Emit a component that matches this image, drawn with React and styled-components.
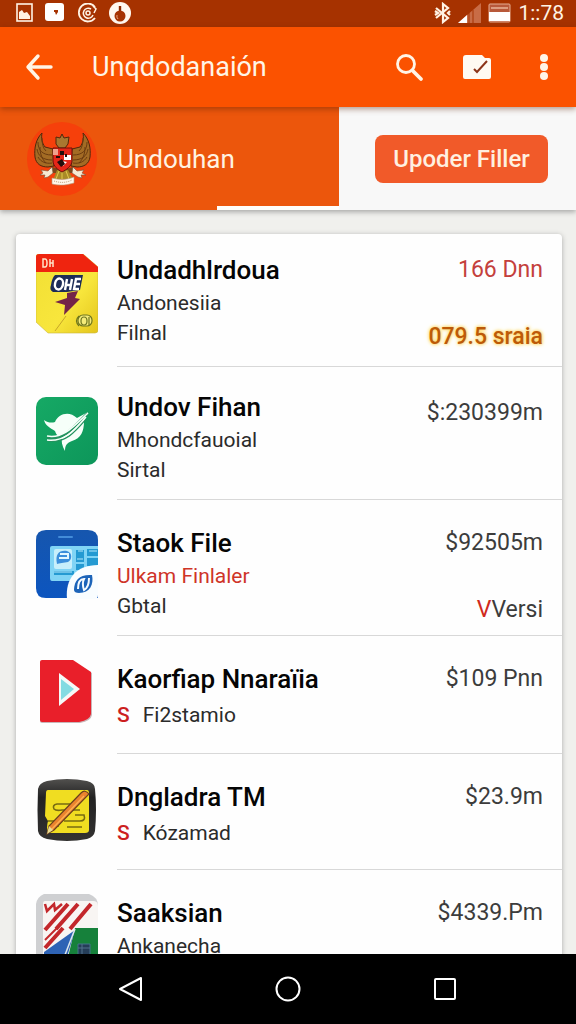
import React from 'react';
import styled, { createGlobalStyle } from 'styled-components';

const GlobalStyle = createGlobalStyle`
  * { box-sizing: border-box; }
  body { margin: 0; background: #f0f0ed; font-family: Roboto, "Liberation Sans", sans-serif; }
  button { font: inherit; color: inherit; border: 0; padding: 0; background: none; cursor: pointer; }
  h1, h2, h3, p, ul { margin: 0; padding: 0; }
  svg { display: block; }
`;

const Screen = styled.div`
  display: flex;
  flex-direction: column;
  height: 100vh;
`;

const StatusBar = styled.div`
  display: flex;
  flex: none;
  align-items: center;
  justify-content: space-between;
  height: 27px;
  padding: 0 12px 2px 16px;
  background: #a63200;
  color: #fff3e4;
`;

const StatusGroup = styled.div`
  display: flex;
  align-items: center;
  gap: ${(p) => p.$gap}px;
`;

const Clock = styled.span`
  font-size: 21px;
  line-height: 24px;
`;

const AppBar = styled.header`
  display: flex;
  flex: none;
  align-items: center;
  height: 80px;
  padding: 0 18px 0 24px;
  background: #fb5200;
  color: #fff5e6;
  z-index: 1;
  box-shadow: 0 2px 6px rgba(90, 30, 0, 0.45);
`;

const IconButton = styled.button`
  display: flex;
  align-items: center;
  justify-content: center;
  width: 30px;
  height: 40px;
`;

const AppTitle = styled.h1`
  flex: 1;
  margin-left: 38px;
  font-size: 27px;
  line-height: 32px;
  font-weight: 400;
`;

const Actions = styled.div`
  display: flex;
  gap: 37px;
`;

const Banner = styled.section`
  display: grid;
  grid-template-columns: 339fr 237fr;
  flex: none;
  height: 103px;
  background: #f8f8f8;
  box-shadow: 0 2px 5px rgba(60, 60, 60, 0.4);
`;

const Profile = styled.div`
  position: relative;
  display: flex;
  align-items: center;
  gap: 20px;
  padding-left: 27px;
  background: #ec560c;
  color: #fff3e2;
`;

const ProfileName = styled.h2`
  font-size: 26px;
  line-height: 32px;
  font-weight: 400;
`;

const Indicator = styled.span`
  position: absolute;
  right: 0;
  bottom: 0;
  width: 36%;
  height: 4px;
  background: #fffdfa;
`;

const BannerAction = styled.div`
  display: flex;
  align-items: center;
  justify-content: center;
  padding-left: 8px;
`;

const FilterButton = styled.button`
  height: 48px;
  padding: 0 18px;
  border-radius: 8px;
  background: #f15a29;
  color: #fff0e0;
  font-size: 24px;
  font-weight: 500;
`;

const Content = styled.main`
  flex: 1;
  min-height: 0;
  overflow: hidden;
  padding: 24px 14px 0 16px;
`;

const Card = styled.ul`
  list-style: none;
  border-radius: 4px;
  background: #fefefe;
  box-shadow: 0 1px 5px rgba(60, 60, 60, 0.38);
`;

const Row = styled.li`
  display: grid;
  grid-template-columns: 62px 1fr;
  gap: 19px;
  padding-left: 20px;
`;

const Thumb = styled.div`
  padding-top: ${(p) => p.$top}px;
`;

const Body = styled.div`
  display: flex;
  justify-content: space-between;
  padding: ${(p) => p.$top}px 19px ${(p) => p.$bottom}px 0;
  border-bottom: 1px solid #d8d8d8;
  white-space: nowrap;
`;

const Name = styled.h3`
  font-size: 26px;
  line-height: 36px;
  font-weight: 500;
  color: #050505;
`;

const Line = styled.p`
  font-size: 21px;
  line-height: 30px;
  color: ${(p) => (p.$alert ? '#cf3428' : '#2b2b2b')};
`;

const TaggedLine = styled.p`
  display: flex;
  gap: 13px;
  font-size: 21px;
  line-height: 36px;
  color: #2b2b2b;
`;

const Tag = styled.span`
  color: #cc1f1f;
  font-weight: 500;
`;

const Values = styled.div`
  display: flex;
  flex-direction: column;
  align-items: flex-end;
  gap: 31px;
  padding-top: ${(p) => (p.$low ? 6 : 0)}px;
`;

const tones = { normal: '#3c3c3c', red: '#c4403c', amber: '#bd5a08' };

const Amount = styled.span`
  font-size: 23px;
  line-height: 36px;
  font-weight: ${(p) => (p.$tone === 'amber' ? 500 : 400)};
  color: ${(p) => tones[p.$tone || 'normal']};
  text-shadow: ${(p) => (p.$tone === 'amber' ? '0 0 4px #ffd65c, 0 0 3px #ffd65c' : 'none')};
`;

const Flag = styled.span`
  color: #d02a1c;
`;

const NavBar = styled.nav`
  display: grid;
  grid-template-columns: repeat(3, 1fr);
  flex: none;
  align-items: center;
  justify-items: center;
  height: 70px;
  padding: 0 52px;
  background: #000;
  color: #fff;
`;

const Emblem = () => (
  <svg width="70" height="74" viewBox="0 0 70 74" aria-hidden="true">
    <ellipse cx="35" cy="37" rx="35" ry="37" fill="#f6400b" />
    <g stroke="#51280b" strokeWidth="1" strokeLinejoin="round">
      <path fill="#a36b24" d="M15 11C9 17 7 26 8 35c1 7 6 10 13 10l6-1-1-17-8-2c-3-4-4-9-3-14z" />
      <path fill="#a36b24" d="M56 11c6 6 8 15 7 24-1 7-6 10-13 10l-6-1 1-17 8-2c3-4 4-9 3-14z" />
      <path fill="#a97730" d="M29 15l4 1 2-4 2 4 5-1-1 7-3 4h-6l-3-4z" />
    </g>
    <g fill="none" stroke="#6b3b10" strokeWidth="1">
      <path d="M11 20c0 8 4 13 14 13M10 27c1 7 6 11 15 11M11 35c3 5 8 7 14 6M15 16c0 6 1 10 4 13M13 25c0 7 2 12 6 16" />
      <path d="M60 20c0 8-4 13-14 13M61 27c-1 7-6 11-15 11M60 35c-3 5-8 7-14 6M56 16c0 6-1 10-4 13M58 25c0 7-2 12-6 16" />
    </g>
    <path fill="#7b471b" d="M25 45l-5 6h31l-5-6-10 3z" />
    <path fill="#f7e9d3" stroke="#7b5337" strokeWidth=".6" d="M25 45l-4 4-7-1 2 3-3 2h5l-1 3 4-1 5-4zM46 45l4 4 7-1-2 3 4 2h-5l1 3-4-1-6-4z" />
    <path fill="#a98a27" d="M30 48h11l5 9-20 1z" />
    <path d="M32 49l-3 8m6-8v8m4-8 3 8" stroke="#e4c74c" strokeWidth="1" />
    <path fill="#e62619" stroke="#6a120b" strokeWidth="1" d="M26 26h19v13c0 5-6 9-10 11-4-2-9-6-9-11z" />
    <path fill="#f0a08e" d="M26 27h5v6h-5z" />
    <path fill="#fff" d="M37 33h7v5h-7zM35 39l5 1-4 4z" />
    <path fill="#240d0b" d="M33 29h4v4h-4zM30 40l5-3 3 5-4 3zM38 32h2v3h-2zM29 34h4v2h-4z" />
    <path fill="#fff6e9" stroke="#b29a7e" strokeWidth=".6" d="M25 56c7 2 15 2 22-1v6c-7 2-14 3-22 1z" />
    <path d="M27 59c6 2 12 2 18-1" stroke="#bd9f7d" strokeWidth="1" strokeDasharray="1 1" fill="none" />
  </svg>
);

const PackIcon = () => (
  <svg width="62" height="80" viewBox="0 0 62 80" aria-hidden="true">
    <defs>
      <linearGradient id="pack" x1="0" y1="0" x2="1" y2="1">
        <stop offset="0" stopColor="#f1df34" />
        <stop offset=".6" stopColor="#f8e63c" />
        <stop offset="1" stopColor="#e4c51c" />
      </linearGradient>
    </defs>
    <path d="M3 0h44l15 13v63q0 3-3 3H12L0 68V3q0-3 3-3z" fill="url(#pack)" stroke="#cbb73b" strokeWidth=".6" />
    <path d="M3 0h44l15 13v5H0V3q0-3 3-3z" fill="#ef240f" />
    <g stroke="#ffe2c8" strokeWidth="1.5" fill="none">
      <path d="M7 5v8h2q2 0 2-4t-2-4zM14 5v8M17 6v7M14 9h3" />
    </g>
    <path d="M19 21h28l-3 15-13 2H17q-4-2-2-7 1-7 4-10z" fill="#1d2c57" />
    <g stroke="#fff" strokeWidth="2.4" fill="none">
      <ellipse cx="23" cy="30" rx="4" ry="5.5" transform="rotate(12 23 30)" />
      <path d="M31 25l-2 11M36 25l-2 11M30 31h5M45 25h-5l-2 10h5M39 30h5" />
    </g>
    <path d="M31 39l11-2-3 7 5 1-16 16 1-10-10-3 12-4z" fill="#742448" />
    <path d="M19 77l11-15" stroke="#c7a728" strokeWidth="1" />
    <g fill="none" stroke="#6e761f" strokeWidth="1.2">
      <rect x="42" y="61" width="14" height="11" rx="5" fill="#f4eb7a" />
      <ellipse cx="48" cy="67" rx="3" ry="4" />
      <path d="M53 63v8M43 62q-5 5 0 10" />
    </g>
  </svg>
);

const BirdIcon = () => (
  <svg width="62" height="80" viewBox="0 0 62 80" aria-hidden="true">
    <defs>
      <linearGradient id="bird" x1="0" y1="0" x2="1" y2="1">
        <stop offset="0" stopColor="#16a965" />
        <stop offset="1" stopColor="#0d965a" />
      </linearGradient>
    </defs>
    <rect y="6" width="62" height="68" rx="10" fill="url(#bird)" />
    <path fill="#f6fff9" d="M8 29c4 3 8 3 11 2 3-8 14-12 22-4l11-6c-2 4-3 6-4 9 0 11-3 17-12 20-5 2-7 4-7 10-3-5-4-10-3-15-5 0-6-2-7-5C14 37 9 34 8 29z" />
    <path d="M11 46c17 4 26-9 41-24" stroke="#24935f" strokeWidth="3" fill="none" />
    <path d="M12 50c18 2 27-9 38-22" stroke="#24935f" strokeWidth="1.4" fill="none" />
    <path d="M11 45c16 3 26-9 41-23M11 49c17 2 26-8 39-23" stroke="#f6fff9" strokeWidth="1.5" fill="none" />
  </svg>
);

const FileIcon = () => (
  <svg width="62" height="80" viewBox="0 0 62 80" aria-hidden="true">
    <defs>
      <linearGradient id="file" x1="0" y1="0" x2="0" y2="1">
        <stop offset="0" stopColor="#1656ae" />
        <stop offset="1" stopColor="#0c55bf" />
      </linearGradient>
    </defs>
    <path d="M10 6h42q10 0 10 10v58H10Q0 74 0 64V16Q0 6 10 6z" fill="url(#file)" />
    <path d="M23 13h13" stroke="#438cd9" strokeWidth="2" strokeLinecap="round" />
    <path d="M16 22h46v35H16q-2 0-2-3V24q0-2 2-2z" fill="#80d4f5" />
    <rect x="18" y="25" width="18" height="20" rx="2" fill="#c7effb" />
    <path d="M21 40c-2-10 2-14 10-13 6 2 5 9 1 11-4 1-9 1-11 2z" fill="#3c8fdb" />
    <path d="M24 30h8v4h-9" fill="none" stroke="#e4f8ff" strokeWidth="2" />
    <path d="M18 47h20v4H18zM40 26h8v12h-8zM51 25h11v7H51zM51 34h11v8H51zM40 40h8v6h-8z" fill="#249ad2" />
    <path d="M42 27h5M53 27h8M41 35h6M18 48h18" stroke="#b6e8fa" strokeWidth="1.2" />
    <path d="M31 75c-2-20 9-34 31-34v30q0 4-4 4z" fill="#f9fdff" />
    <path d="M38 66c0-10 6-16 18-15 2 9-2 18-13 18-3 0-5-1-5-3z" fill="#1c64b9" />
    <path d="M42 65c0-7 2-10 6-10-2 4-1 8 0 11 4-2 5-6 5-12" stroke="#f5fbff" strokeWidth="2" fill="none" />
  </svg>
);

const PlayIcon = () => (
  <svg width="62" height="80" viewBox="0 0 62 80" aria-hidden="true">
    <path d="M6 9h31l19 12v42q-1 6-12 8H6q-2 0-2-2V11q0-2 2-2z" fill="#c9b6b8" />
    <path d="M6 8h31l18 12v42q-1 6-12 8H6q-2 0-2-2V10q0-2 2-2z" fill="#e91f2a" />
    <path d="M23 21v33l21-17z" fill="#f5f8f7" />
    <path d="M25 27v21l13-11z" fill="#83dbe2" />
  </svg>
);

const NoteIcon = () => (
  <svg width="62" height="80" viewBox="0 0 62 80" aria-hidden="true">
    <defs>
      <linearGradient id="frame" x1="0" y1="0" x2="0" y2="1">
        <stop offset="0" stopColor="#51504e" />
        <stop offset=".3" stopColor="#222" />
        <stop offset="1" stopColor="#333231" />
      </linearGradient>
    </defs>
    <path d="M11 11q20-4 40 0 8 2 8 8 2 21 0 42-1 6-8 8-20 4-40 0-8-2-9-8-1-21 0-42 1-6 9-8z" fill="url(#frame)" />
    <path d="M12 20h39q2 0 2 3v37q0 3-4 3H12q-2-5 0-12l-3-5 1-23q0-3 2-3z" fill="#f0dd21" />
    <g fill="none" stroke="#776b12" strokeWidth="1.6">
      <path d="M34 34H21q-5 1-3 5 2 2 8 1h18M39 45h9q2 6-4 6H28M31 57h15M12 51h13M13 56h10" />
    </g>
    <path d="M45 23q4-4 8 1L18 60l-7 4 2-8z" fill="#eb832e" stroke="#6a401c" strokeWidth="1.2" />
    <path d="M48 26L15 60" stroke="#ffb052" strokeWidth="1.3" />
    <path d="M11 64l2-8 4 4z" fill="#eadd94" />
  </svg>
);

const PosterIcon = () => (
  <svg width="62" height="80" viewBox="0 0 62 80" aria-hidden="true">
    <path d="M8 0h45q9 3 9 12v68H0V10Q1 3 8 0z" fill="#cfd0d2" />
    <path d="M9 7h48q5 0 5 5v68H7V10q0-3 2-3z" fill="#f8f5f3" />
    <g stroke="#c3272b" strokeWidth="4" fill="none">
      <path d="M9 36l23-26M20 35l22-25M34 35l21-25M9 54l18-20" />
      <path d="M9 10l2 7 7-7 1 6 7-6" strokeWidth="2.5" />
      <path d="M9 46l12-12" strokeWidth="2" />
    </g>
    <path d="M39 34h23v46H28z" fill="#16813b" />
    <path d="M8 58l31-22-13 44H8z" fill="#2e63b5" />
    <path d="M39 35L27 66" stroke="#dfe8ed" strokeWidth="1.5" />
    <path d="M42 50h12v18H42z" fill="#253d58" stroke="#45728c" strokeWidth="1" />
    <path d="M42 54h12M46 50v16" stroke="#52728c" strokeWidth="1" />
  </svg>
);

const items = [
  {
    name: 'Undadhlrdoua', lines: ['Andonesiia', 'Filnal'], icon: PackIcon, iconTop: 20, top: 18, bottom: 11,
    values: [{ text: '166 Dnn', tone: 'red' }, { text: '079.5 sraia', tone: 'amber' }],
  },
  {
    name: 'Undov Fihan', lines: ['Mhondcfauoial', 'Sirtal'], icon: BirdIcon, iconTop: 24, top: 22, bottom: 14,
    low: true, values: [{ text: '$:230399m' }],
  },
  {
    name: 'Staok File', lines: ['Ulkam Finlaler', 'Gbtal'], alertLine: 0, icon: FileIcon, iconTop: 24, top: 25, bottom: 7,
    values: [{ text: '$92505m' }, { flag: 'V', text: 'Versi' }],
  },
  { name: 'Kaorfiap Nnaraïia', tagged: 'Fi2stamio', icon: PlayIcon, iconTop: 16, top: 25, bottom: 20, values: [{ text: '$109 Pnn' }] },
  { name: 'Dngladra TM', tagged: 'Kózamad', icon: NoteIcon, iconTop: 16, top: 25, bottom: 18, values: [{ text: '$23.9m' }] },
  { name: 'Saaksian', lines: ['Ankanecha'], icon: PosterIcon, iconTop: 24, top: 25, bottom: 14, values: [{ text: '$4339.Pm' }] },
];

function DownloadRow({ item }) {
  const Icon = item.icon;
  return (
    <Row>
      <Thumb $top={item.iconTop}><Icon /></Thumb>
      <Body $top={item.top} $bottom={item.bottom}>
        <div>
          <Name>{item.name}</Name>
          {item.lines && item.lines.map((line, i) => (
            <Line key={line} $alert={item.alertLine === i}>{line}</Line>
          ))}
          {item.tagged && <TaggedLine><Tag>S</Tag><span>{item.tagged}</span></TaggedLine>}
        </div>
        <Values $low={item.low}>
          {item.values.map((v) => (
            <Amount key={v.text} $tone={v.tone}>
              {v.flag && <Flag>{v.flag}</Flag>}
              {v.text}
            </Amount>
          ))}
        </Values>
      </Body>
    </Row>
  );
}

export default function App() {
  return (
    <Screen>
      <GlobalStyle />
      <StatusBar>
        <StatusGroup $gap={12}>
          <svg width="17" height="19" viewBox="0 0 17 19" fill="none">
            <rect x="1" y="1" width="15" height="17" stroke="currentColor" strokeWidth="1.6" />
            <path d="M3 16V9l3-2 2 3 3-1 3 4v3z" fill="currentColor" />
          </svg>
          <svg width="20" height="19" viewBox="0 0 20 19">
            <rect width="19" height="18" rx="3" fill="#fff" />
            <path d="M9 7h4v2l-2 3-1-3H9z" fill="#a63200" />
          </svg>
          <svg width="20" height="20" viewBox="0 0 20 20" fill="none" stroke="currentColor">
            <path d="M18 4A9 9 0 1 0 18 15" strokeWidth="1.8" />
            <path d="M14 6a5 5 0 1 0 2 6M16 3l3 3-2 4" strokeWidth="1.5" />
            <circle cx="11" cy="10" r="2" strokeWidth="1.5" />
          </svg>
          <svg width="22" height="22" viewBox="0 0 22 22">
            <circle cx="11" cy="11" r="11" fill="#fff8ef" />
            <path d="M11 4v6" stroke="#8c2a00" strokeWidth="2.4" />
            <circle cx="11" cy="14" r="5.5" fill="#a63200" />
            <path d="M8 13a4 4 0 0 0 1 4" stroke="#e9a47e" strokeWidth="1" fill="none" />
          </svg>
        </StatusGroup>
        <StatusGroup $gap={7}>
          <svg width="17" height="22" viewBox="0 0 17 22" fill="none" stroke="currentColor" strokeWidth="2.2">
            <path d="M2 6l12 10-5 4V2l5 4L2 16M1 9l3 2-3 2M16 9l-2 2 2 2" />
          </svg>
          <svg width="23" height="20" viewBox="0 0 23 20">
            <path d="M0 20L23 0v20z" fill="#c86c46" />
            <path d="M0 20l9-8v8z" fill="#fff" />
            <path d="M11 10v10M15 7v13" stroke="#a63200" strokeWidth="1" />
          </svg>
          <svg width="23" height="20" viewBox="0 0 23 20">
            <rect x="1" y="1" width="21" height="18" rx="1" fill="#b8593a" stroke="#e5ad92" />
            <path d="M1 9h21v9H1z" fill="#fff" />
            <path d="M3 5h17" stroke="#dc9d80" strokeWidth="2" />
          </svg>
          <Clock>1::78</Clock>
        </StatusGroup>
      </StatusBar>

      <AppBar>
        <IconButton aria-label="Back">
          <svg width="30" height="30" viewBox="0 0 30 30" fill="none" stroke="currentColor" strokeWidth="3.4" strokeLinecap="round" strokeLinejoin="round">
            <path d="M27 15H4M14 4L4 15l10 11" />
          </svg>
        </IconButton>
        <AppTitle>Unqdodanaión</AppTitle>
        <Actions>
          <IconButton aria-label="Search">
            <svg width="30" height="30" viewBox="0 0 30 30" fill="none" stroke="currentColor" strokeLinecap="round">
              <circle cx="12" cy="12" r="8.5" strokeWidth="2.8" />
              <path d="M18.5 18.5L27 27" strokeWidth="3.8" />
            </svg>
          </IconButton>
          <IconButton aria-label="Edit folder">
            <svg width="30" height="30" viewBox="0 0 30 30">
              <path d="M5 3h16l3 3h4q2 0 2 2v17q0 2-2 2H4q-2 0-2-2V6q0-3 3-3z" fill="#fffaf2" />
              <path d="M13 17l3 3L26 9" fill="none" stroke="#8c3418" strokeWidth="2" />
            </svg>
          </IconButton>
          <IconButton aria-label="More options">
            <svg width="30" height="30" viewBox="0 0 30 30" fill="currentColor">
              <circle cx="16" cy="6" r="4" />
              <circle cx="16" cy="15" r="4" />
              <circle cx="16" cy="24" r="4" />
            </svg>
          </IconButton>
        </Actions>
      </AppBar>

      <Banner>
        <Profile>
          <Emblem />
          <ProfileName>Undouhan</ProfileName>
          <Indicator />
        </Profile>
        <BannerAction>
          <FilterButton>Upoder Filler</FilterButton>
        </BannerAction>
      </Banner>

      <Content>
        <Card>
          {items.map((item) => <DownloadRow key={item.name} item={item} />)}
        </Card>
      </Content>

      <NavBar>
        <IconButton aria-label="Navigate back">
          <svg width="26" height="28" viewBox="0 0 26 28" fill="none" stroke="currentColor" strokeWidth="2" strokeLinejoin="round">
            <path d="M23 3v22L2 14z" />
          </svg>
        </IconButton>
        <IconButton aria-label="Home">
          <svg width="26" height="26" viewBox="0 0 26 26" fill="none" stroke="currentColor" strokeWidth="2">
            <circle cx="13" cy="13" r="11.5" />
          </svg>
        </IconButton>
        <IconButton aria-label="Recent apps">
          <svg width="24" height="24" viewBox="0 0 24 24" fill="none" stroke="currentColor" strokeWidth="2">
            <rect x="2" y="2" width="20" height="20" rx="1" />
          </svg>
        </IconButton>
      </NavBar>
    </Screen>
  );
}
